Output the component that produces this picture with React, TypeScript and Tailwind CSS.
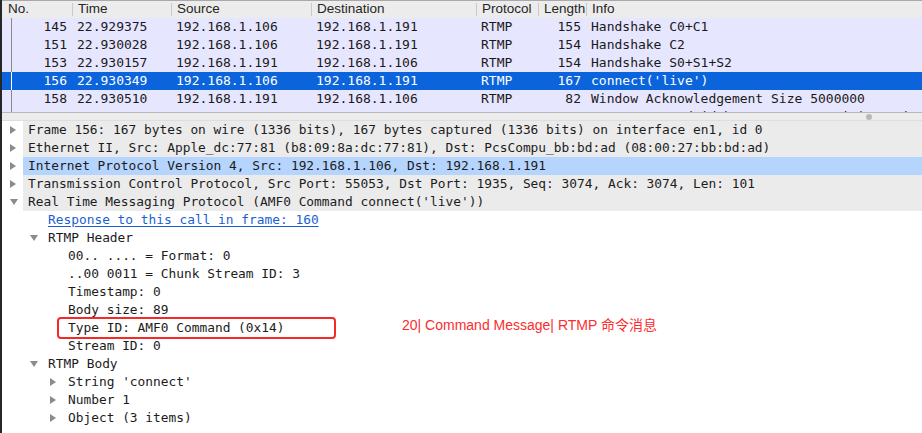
import React from "react";

const mono = { fontFamily: '"DejaVu Sans Mono", "Liberation Mono", monospace' };

interface Packet {
  no: string;
  time: string;
  src: string;
  dst: string;
  proto: string;
  len: string;
  info: string;
  selected?: boolean;
}

const packets: Packet[] = [
  { no: "145", time: "22.929375", src: "192.168.1.106", dst: "192.168.1.191", proto: "RTMP", len: "155", info: "Handshake C0+C1" },
  { no: "151", time: "22.930028", src: "192.168.1.106", dst: "192.168.1.191", proto: "RTMP", len: "154", info: "Handshake C2" },
  { no: "153", time: "22.930157", src: "192.168.1.191", dst: "192.168.1.106", proto: "RTMP", len: "154", info: "Handshake S0+S1+S2" },
  { no: "156", time: "22.930349", src: "192.168.1.106", dst: "192.168.1.191", proto: "RTMP", len: "167", info: "connect('live')", selected: true },
  { no: "158", time: "22.930510", src: "192.168.1.191", dst: "192.168.1.106", proto: "RTMP", len: "82", info: "Window Acknowledgement Size 5000000" },
  { no: "161", time: "22.931030", src: "192.168.1.191", dst: "192.168.1.106", proto: "RTMP", len: "201", info: "Set Peer Bandwidth 5000000,Dynamic|Set Chunk Size 4096|_result()" },
];

const cols = "grid grid-cols-[70px_99px_140px_165px_62px_48px_1fr]";

const headers = ["No.", "Time", "Source", "Destination", "Protocol", "Length", "Info"];

function Arrow({ open }: { open?: boolean }) {
  if (open) {
    return (
      <svg width="8" height="6" viewBox="0 0 8 6" className="block">
        <path d="M0 0 L8 0 L4 6 Z" fill="#8c8c8c" />
      </svg>
    );
  }
  return (
    <svg width="6" height="8" viewBox="0 0 6 8" className="block">
      <path d="M0 0 L6 4 L0 8 Z" fill="#8c8c8c" />
    </svg>
  );
}

const indent: Record<number, string> = { 0: "pl-0", 1: "pl-[20px]", 2: "pl-[40px]" };

interface NodeProps {
  level: number;
  arrow?: "open" | "closed";
  top?: boolean;
  highlight?: boolean;
  link?: boolean;
  children: React.ReactNode;
  extra?: React.ReactNode;
}

function TreeRow({ level, arrow, top, highlight, link, children, extra }: NodeProps) {
  const band = highlight ? "bg-[#b5d5fe]" : top ? "bg-[#ebebeb]" : "";
  return (
    <div className={`relative flex h-[18px] items-center ${indent[level]}`}>
      <div className="flex h-full w-[21px] shrink-0 items-center pl-[8px]">
        {arrow && <Arrow open={arrow === "open"} />}
      </div>
      <div
        className={`flex h-full flex-1 items-center whitespace-nowrap pl-[5px] leading-[18px] ${band} ${
          link ? "text-[#1b5fd3] underline underline-offset-2" : "text-[#1c1c1c]"
        }`}
      >
        {children}
      </div>
      {extra}
    </div>
  );
}

export default function App() {
  return (
    <div className="h-[433px] w-[922px] overflow-hidden border-l-2 border-[#262626] bg-white text-[13px]">
      {/* packet list */}
      <div className={`${cols} h-[18px] items-center border-t border-[#a9a9a9] bg-[#ececec] text-[13.5px] text-[#262626]`} style={{ fontFamily: '"Liberation Sans", Arial, sans-serif' }}>
        {headers.map((h, i) => (
          <div key={h} className="flex h-full items-center overflow-hidden whitespace-nowrap">
            {i > 0 && <span className="h-[13px] w-px shrink-0 bg-[#c9c9c9]" />}
            <span className={i === 0 ? "pl-[6px]" : "pl-[5px]"}>{h}</span>
          </div>
        ))}
      </div>
      <div className="h-[94px] overflow-hidden bg-[#e7e6ff]" style={mono}>
        {packets.map((p) => (
          <div
            key={p.no}
            className={`${cols} h-[18px] leading-[18px] whitespace-nowrap ${
              p.selected ? "bg-[#0b64dc] text-white" : "text-[#1a1a1a]"
            }`}
          >
            <div className="flex h-full">
              <span className={`h-full w-[10px] shrink-0 border-r ${p.selected ? "border-white" : "border-[#8a8a8a]"}`} />
              <span className="flex-1 pr-[5px] text-right">{p.no}</span>
            </div>
            <div className="pl-[5px]">{p.time}</div>
            <div className="pl-[5px]">{p.src}</div>
            <div className="pl-[5px]">{p.dst}</div>
            <div className="pl-[5px]">{p.proto}</div>
            <div className="pr-[5px] text-right">{p.len}</div>
            <div className="overflow-hidden pl-[5px]">{p.info}</div>
          </div>
        ))}
      </div>

      {/* splitter */}
      <div className="flex h-[9px] items-center border-t border-b border-t-[#b8b8b8] border-b-[#dedede] bg-[#ececec]">
        <span className="ml-[864px] h-[6px] w-[6px] rounded-full bg-[#b8b8b8]" />
      </div>

      {/* details tree */}
      <div className="text-[12.85px]" style={mono}>
        <TreeRow level={0} arrow="closed" top>
          Frame 156: 167 bytes on wire (1336 bits), 167 bytes captured (1336 bits) on interface en1, id 0
        </TreeRow>
        <TreeRow level={0} arrow="closed" top>
          Ethernet II, Src: Apple_dc:77:81 (b8:09:8a:dc:77:81), Dst: PcsCompu_bb:bd:ad (08:00:27:bb:bd:ad)
        </TreeRow>
        <TreeRow level={0} arrow="closed" top highlight>
          Internet Protocol Version 4, Src: 192.168.1.106, Dst: 192.168.1.191
        </TreeRow>
        <TreeRow level={0} arrow="closed" top>
          Transmission Control Protocol, Src Port: 55053, Dst Port: 1935, Seq: 3074, Ack: 3074, Len: 101
        </TreeRow>
        <TreeRow level={0} arrow="open" top>
          Real Time Messaging Protocol (AMF0 Command connect('live'))
        </TreeRow>
        <TreeRow level={1} link>
          Response to this call in frame: 160
        </TreeRow>
        <TreeRow level={1} arrow="open">
          RTMP Header
        </TreeRow>
        <TreeRow level={2}>00.. .... = Format: 0</TreeRow>
        <TreeRow level={2}>..00 0011 = Chunk Stream ID: 3</TreeRow>
        <TreeRow level={2}>Timestamp: 0</TreeRow>
        <TreeRow level={2}>Body size: 89</TreeRow>
        <TreeRow
          level={2}
          extra={
            <>
              <div className="absolute left-[55px] top-[-2px] h-[22px] w-[279px] rounded-[4px] border-2 border-[#f42a2a]" />
              <div
                className="absolute left-[400px] top-[-3px] h-[18px] whitespace-nowrap text-[14px] leading-[18px] text-[#fc2d2d]"
                style={{ fontFamily: '"Liberation Sans", "Noto Sans CJK SC", sans-serif' }}
              >
                20| Command Message| RTMP 命令消息
              </div>
            </>
          }
        >
          Type ID: AMF0 Command (0x14)
        </TreeRow>
        <TreeRow level={2}>Stream ID: 0</TreeRow>
        <TreeRow level={1} arrow="open">
          RTMP Body
        </TreeRow>
        <TreeRow level={2} arrow="closed">
          String 'connect'
        </TreeRow>
        <TreeRow level={2} arrow="closed">
          Number 1
        </TreeRow>
        <TreeRow level={2} arrow="closed">
          Object (3 items)
        </TreeRow>
      </div>
    </div>
  );
}
